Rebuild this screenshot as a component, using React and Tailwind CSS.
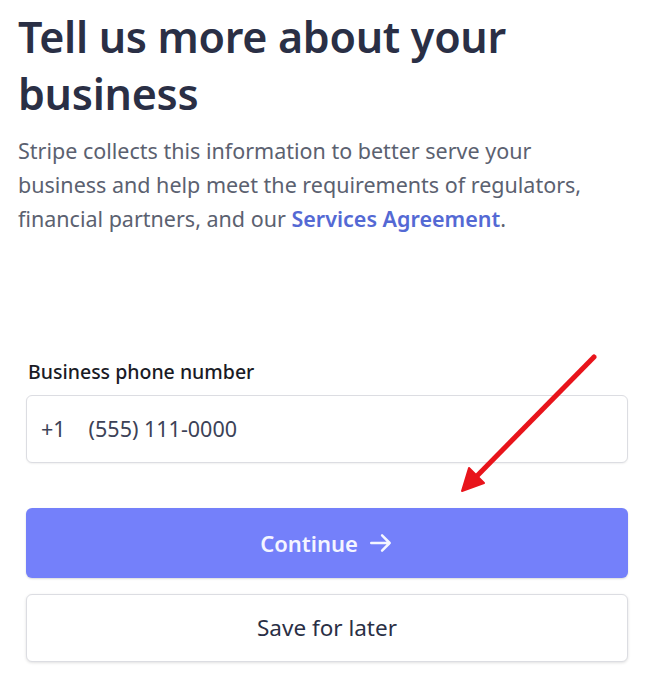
import React from "react";

export default function App() {
  const font = { fontFamily: '"Noto Sans", "Open Sans", sans-serif' };
  return (
    <div className="relative w-[651px] h-[685px] bg-white overflow-hidden" style={font}>
      <div className="pl-[18px] pr-[20px] pt-[8px]">
        <h1 className="text-[43px] leading-[57px] font-semibold text-[#2a2f45] tracking-[-0.3px]">
          Tell us more about your
          <br />
          business
        </h1>
        <p className="mt-[12px] text-[21.5px] leading-[34px] text-[#5b6170]">
          Stripe collects this information to better serve your
          <br />
          business and help meet the requirements of regulators,
          <br />
          financial partners, and our <span className="text-[#5469d4] font-semibold">Services Agreement</span>.
        </p>
      </div>
      <div className="ml-[26px] w-[602px] mt-[123px]">
        <label className="block ml-[2px] text-[19.5px] leading-[26px] font-medium text-[#1a1b25]">
          Business phone number
        </label>
        <div className="mt-[10px] h-[68px] rounded-[6px] border border-[#dcdde2] bg-white shadow-[0_1px_2px_rgba(0,0,0,0.06)] flex items-center pl-[14px] text-[21.5px] text-[#3c4257]">
          <span>+1</span>
          <span className="ml-[23px]">(555) 111-0000</span>
        </div>
        <button className="mt-[45px] w-full h-[70px] rounded-[6px] bg-[#7480fa] text-[#f4f5ff] text-[22px] font-semibold flex items-center justify-center gap-[10px] shadow-[0_1px_2px_rgba(0,0,0,0.15)]">
          Continue
          <svg width="26" height="26" viewBox="0 0 24 24" fill="none" stroke="#f4f5ff" strokeWidth="2.3" strokeLinecap="round" strokeLinejoin="round">
            <path d="M3 12h17M13 5l7 7-7 7" />
          </svg>
        </button>
        <button className="mt-[16px] w-full h-[68px] rounded-[6px] bg-white border border-[#dcdde2] shadow-[0_1px_3px_rgba(0,0,0,0.12)] text-[22.5px] text-[#2a2f45] flex items-center justify-center">
          Save for later
        </button>
      </div>
      <svg className="absolute left-0 top-0 pointer-events-none" width="651" height="685">
        <line x1="594" y1="357" x2="474" y2="479" stroke="#e8141b" strokeWidth="5" strokeLinecap="round" />
        <polygon points="462,491 469,468 484,483" fill="#e8141b" stroke="#e8141b" strokeWidth="2" strokeLinejoin="round" />
      </svg>
    </div>
  );
}
